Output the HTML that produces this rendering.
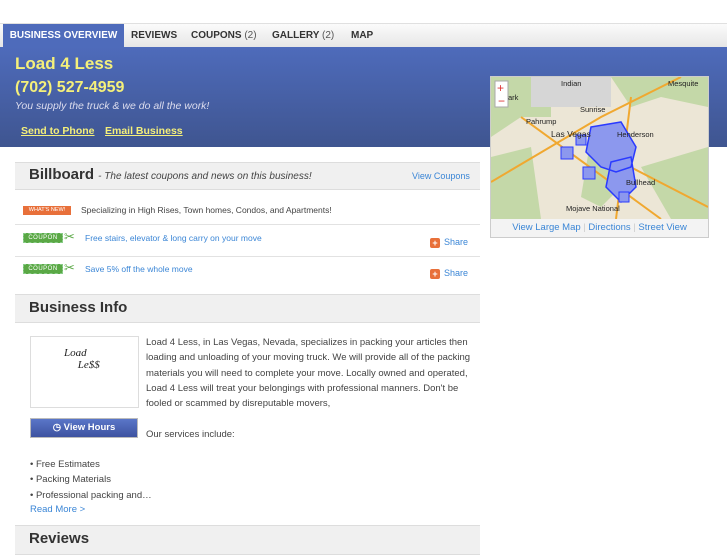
<!DOCTYPE html>
<html><head><style>
*{margin:0;padding:0;box-sizing:border-box}
body{width:727px;height:545px;overflow:hidden;background:#fff;font-family:"Liberation Sans",sans-serif;position:relative}
.abs{position:absolute}
#nav{left:0;top:23px;width:727px;height:24px;background:linear-gradient(#fbfbfb,#e6e6e6);border-top:1px solid #e0e0e0}
#nav span{position:absolute;top:0;height:23px;line-height:23px;font-size:10px;font-weight:bold;color:#333}
#nav span i{font-style:normal;font-weight:normal;color:#555}
#blue{left:0;top:47px;width:727px;height:100px;background:linear-gradient(#4e6bbb,#3f5590)}
.y{color:#f5f07a;font-weight:bold}
.hdr{background:#f0f0f0;border-top:1px solid #ddd;border-bottom:1px solid #ddd;left:15px;width:465px}
.lnk{color:#3b86d6;font-size:9px}
.line{left:15px;width:465px;height:1px;background:#e2e2e2}
.cp{width:40px;height:10px;background:#5aa845;border:1px dashed #8c8;color:#fff;font-size:6px;line-height:9px;text-align:center;letter-spacing:.5px}
.sh{font-size:9px;color:#3b86d6}
.sh b{display:inline-block;width:10px;height:10px;background:#e8703a;color:#fff;font-size:9px;line-height:10px;text-align:center;border-radius:2px;margin-right:4px;vertical-align:-1px}
p.t{font-size:9.5px;color:#444;line-height:15.3px}
</style></head><body>
<div id="nav" class="abs">
<span style="left:3px;width:121px;background:#4e6bbb;color:#fff;text-align:center">BUSINESS OVERVIEW</span>
<span style="left:131px">REVIEWS</span>
<span style="left:191px">COUPONS <i>(2)</i></span>
<span style="left:272px">GALLERY <i>(2)</i></span>
<span style="left:351px">MAP</span>
</div>
<div id="blue" class="abs"></div>
<div class="abs y" style="left:15px;top:54px;font-size:17px">Load 4 Less</div>
<div class="abs y" style="left:15px;top:79px;font-size:16px">(702) 527-4959</div>
<div class="abs" style="left:15px;top:100px;font-size:10.5px;font-style:italic;color:#dde">You supply the truck &amp; we do all the work!</div>
<div class="abs y" style="left:21px;top:125px;font-size:10.5px;text-decoration:underline">Send to Phone</div>
<div class="abs y" style="left:105px;top:125px;font-size:10.5px;text-decoration:underline">Email Business</div>

<div class="abs" style="left:490px;top:76px;width:219px;height:162px;background:#f3f3f3;border:1px solid #ccc"></div>
<svg class="abs" style="left:491px;top:77px" width="217" height="142">
<rect width="217" height="142" fill="#ece6d6"/>
<path d="M0 0H60V40H30L0 60Z M120 0H217V30L170 20L140 30Z M0 80L40 70L50 142H0Z M100 60L130 50L140 100L110 130L90 120Z M150 90L217 70V142H180Z" fill="#c4d8a8"/>
<rect x="40" y="0" width="80" height="30" fill="#d6d6d6"/>
<path d="M0 105L110 40L150 20L190 0 M140 20L125 142 M120 80L217 130 M30 40L170 142" stroke="#f0a830" stroke-width="2" fill="none"/>
<path d="M100 50L130 45L145 70L140 90L125 95L110 90L95 75Z M120 85L140 80L145 110L130 125L115 110Z" fill="#8c98ee" stroke="#2a3aff" stroke-width="1.5"/>
<rect x="70" y="70" width="12" height="12" fill="#8c98ee" stroke="#2a3aff"/><rect x="92" y="90" width="12" height="12" fill="#8c98ee" stroke="#2a3aff"/><rect x="128" y="115" width="10" height="10" fill="#8c98ee" stroke="#2a3aff"/><rect x="85" y="58" width="10" height="10" fill="#8c98ee" stroke="#2a3aff"/>
<g font-size="7.5" fill="#222" font-family="Liberation Sans"><text x="89" y="35">Sunrise</text><text x="60" y="60" font-size="8.5">Las Vegas</text><text x="126" y="60">Henderson</text><text x="35" y="47">Pahrump</text><text x="135" y="108">Bullhead</text><text x="75" y="134">Mojave National</text><text x="177" y="9">Mesquite</text><text x="12" y="23">Park</text><text x="70" y="9">Indian</text></g>
<rect x="4" y="4" width="13" height="26" fill="#fff" stroke="#aaa"/><text x="6" y="15" fill="#d33" font-size="12">+</text><text x="7" y="28" fill="#d33" font-size="12">−</text>
</svg>
<div class="abs lnk" style="left:491px;top:222px;width:217px;text-align:center;color:#3b86d6;font-size:9.5px">View Large Map <span style="color:#ccc">|</span> Directions <span style="color:#ccc">|</span> Street View</div>

<div class="abs hdr" style="top:162px;height:28px"></div>
<div class="abs" style="left:29px;top:166px;font-size:15px;font-weight:bold;color:#333">Billboard <span style="font-size:10px;font-weight:normal;font-style:italic;color:#444"> - The latest coupons and news on this business!</span></div>
<div class="abs lnk" style="left:412px;top:171px">View Coupons</div>
<div class="abs" style="left:23px;top:206px;width:48px;height:9px;background:#e8703a;color:#fff;font-size:5.5px;line-height:9px;text-align:center">WHAT'S NEW!</div>
<div class="abs" style="left:81px;top:205px;font-size:8.5px;color:#444">Specializing in High Rises, Town homes, Condos, and Apartments!</div>
<div class="abs line" style="top:224px"></div>
<div class="abs cp" style="left:23px;top:233px">COUPON</div><div class="abs" style="left:64px;top:229px;color:#5aa845;font-size:13px">✂</div>
<div class="abs lnk" style="left:85px;top:233px;font-size:8.5px">Free stairs, elevator &amp; long carry on your move</div>
<div class="abs sh" style="left:430px;top:237px"><b>+</b>Share</div>
<div class="abs line" style="top:256px"></div>
<div class="abs cp" style="left:23px;top:264px">COUPON</div><div class="abs" style="left:64px;top:260px;color:#5aa845;font-size:13px">✂</div>
<div class="abs lnk" style="left:85px;top:264px;font-size:8.5px">Save 5% off the whole move</div>
<div class="abs sh" style="left:430px;top:268px"><b>+</b>Share</div>

<div class="abs hdr" style="top:294px;height:29px"></div>
<div class="abs" style="left:29px;top:299px;font-size:15px;font-weight:bold;color:#333">Business Info</div>
<div class="abs" style="left:30px;top:336px;width:109px;height:72px;border:1px solid #ddd;background:#fff"></div>
<div class="abs" style="left:64px;top:347px;font-size:11px;font-style:italic;font-family:'Liberation Serif',serif;color:#222">Load<br>&nbsp;&nbsp;&nbsp;&nbsp;&nbsp;Le$$</div>
<div class="abs" style="left:30px;top:418px;width:108px;height:20px;background:linear-gradient(#5a76c8,#3d52a0);border:1px solid #bbb;color:#fff;font-size:9.5px;font-weight:bold;text-align:center;line-height:18px">◷ View Hours</div>
<p class="t abs" style="left:146px;top:335px;width:330px">Load 4 Less, in Las Vegas, Nevada, specializes in packing your articles then loading and unloading of your moving truck. We will provide all of the packing materials you will need to complete your move. Locally owned and operated, Load 4 Less will treat your belongings with professional manners. Don't be fooled or scammed by disreputable movers,</p>
<p class="t abs" style="left:146px;top:427px">Our services include:</p>
<p class="t abs" style="left:30px;top:457px">• Free Estimates<br>• Packing Materials<br>• Professional packing and…</p>
<div class="abs lnk" style="left:30px;top:504px;font-size:9.5px">Read More &gt;</div>
<div class="abs hdr" style="top:525px;height:30px"></div>
<div class="abs" style="left:29px;top:530px;font-size:15px;font-weight:bold;color:#333">Reviews</div>
</body></html>
